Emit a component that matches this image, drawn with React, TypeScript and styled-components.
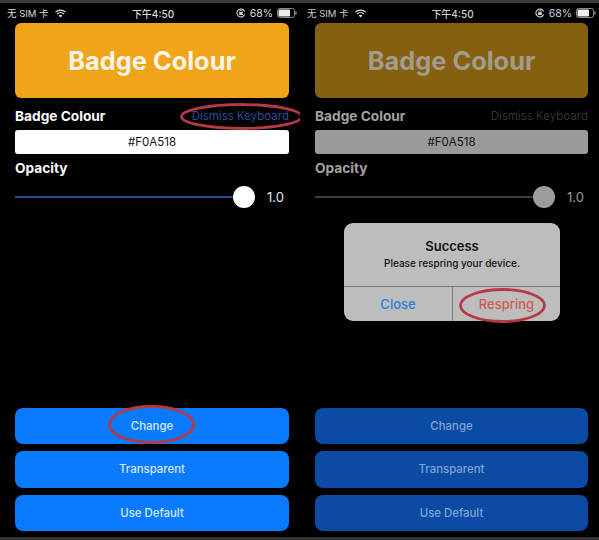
import React from "react";
import styled, { createGlobalStyle } from "styled-components";

const Global = createGlobalStyle`
  html, body { margin: 0; padding: 0; background: #000; }
  body { font-family: Inter, "Noto Sans CJK SC", "Liberation Sans", sans-serif; }
  * { box-sizing: border-box; }
`;

const Page = styled.div`
  width: 599px;
  height: 540px;
  display: flex;
  overflow: hidden;
  background: #000;
`;

const Phone = styled.section<{ $w: number }>`
  position: relative;
  width: ${(p) => p.$w}px;
  height: 540px;
  flex: none;
  display: flex;
  flex-direction: column;
  background: #000;
  border-top: 3px solid #3a3a3c;
  border-bottom: 3px solid #333;
`;

const StatusBar = styled.div<{ $dim: boolean }>`
  height: 20px;
  padding: 0 3px 0 7px;
  display: grid;
  grid-template-columns: 1fr auto 1fr;
  align-items: center;
  color: ${(p) => (p.$dim ? "#d0d0d0" : "#dcdcdc")};
`;

const StatusLeft = styled.div`
  display: flex;
  align-items: center;
  gap: 6px;
  font-size: 9.5px;
`;

const StatusTime = styled.div`
  font-size: 10px;
  font-weight: 500;
  margin-left: 2px;
`;

const StatusRight = styled.div`
  display: flex;
  justify-content: flex-end;
  align-items: center;
  gap: 4px;
  font-size: 10.5px;
`;

const Content = styled.div`
  flex: 1;
  display: flex;
  flex-direction: column;
  padding: 0 11px 6px 15px;
`;

const Banner = styled.div<{ $dim: boolean }>`
  height: 75px;
  border-radius: 6px;
  display: flex;
  align-items: center;
  justify-content: center;
  font-size: 25.4px;
  font-weight: 700;
  background: ${(p) => (p.$dim ? "#85600f" : "#f0a518")};
  color: ${(p) => (p.$dim ? "#a39c8e" : "#fbf4e6")};
`;

const LabelRow = styled.div`
  margin-top: 9px;
  height: 17px;
  display: flex;
  align-items: center;
  justify-content: space-between;
`;

const Label = styled.div<{ $dim: boolean }>`
  font-size: 13.7px;
  font-weight: 700;
  color: ${(p) => (p.$dim ? "#a2a2a2" : "#fafafa")};
`;

const Dismiss = styled.div<{ $dim: boolean }>`
  font-size: 11.5px;
  color: ${(p) => (p.$dim ? "#333336" : "#2a4f9f")};
`;

const Field = styled.div<{ $dim: boolean }>`
  margin-top: 6px;
  height: 24px;
  border-radius: 3px;
  display: flex;
  align-items: center;
  justify-content: center;
  font-size: 11.5px;
  color: #111;
  background: ${(p) => (p.$dim ? "#9a9a9a" : "#fff")};
`;

const OpacityLabel = styled(Label)`
  margin-top: 6px;
  height: 17px;
  line-height: 17px;
`;

const SliderRow = styled.div`
  margin-top: 8px;
  height: 24px;
  display: flex;
  align-items: center;
`;

const Track = styled.div<{ $dim: boolean }>`
  width: 218px;
  height: 2px;
  background: ${(p) => (p.$dim ? "#3c3c3e" : "#2a4a94")};
`;

const Thumb = styled.div<{ $dim: boolean }>`
  width: 22px;
  height: 22px;
  border-radius: 50%;
  flex: none;
  background: ${(p) => (p.$dim ? "#9c9c9c" : "#fff")};
`;

const SliderValue = styled.div<{ $dim: boolean }>`
  margin-left: 12px;
  font-size: 13px;
  color: ${(p) => (p.$dim ? "#9a9a9a" : "#e6e6e6")};
`;

const Spacer = styled.div`
  flex: 1;
`;

const Buttons = styled.div`
  display: flex;
  flex-direction: column;
  gap: 7px;
`;

const ActionButton = styled.div<{ $dim: boolean }>`
  height: 36.5px;
  border-radius: 8px;
  display: flex;
  align-items: center;
  justify-content: center;
  font-size: 11.4px;
  font-weight: 500;
  background: ${(p) => (p.$dim ? "#0b4ba3" : "#0a7aff")};
  color: ${(p) => (p.$dim ? "#7ea4d6" : "#d5e8ff")};
`;

const Alert = styled.div`
  position: absolute;
  left: 44px;
  top: 220px;
  width: 216px;
  height: 98px;
  border-radius: 9px;
  background: #bdbdbd;
  display: flex;
  flex-direction: column;
  color: #111;
`;

const AlertBody = styled.div`
  height: 63px;
  display: flex;
  flex-direction: column;
  align-items: center;
  padding-top: 15px;
`;

const AlertTitle = styled.div`
  font-size: 13px;
  font-weight: 600;
  line-height: 16px;
`;

const AlertText = styled.div`
  font-size: 10px;
  font-weight: 500;
  line-height: 14px;
  margin-top: 2px;
`;

const AlertActions = styled.div`
  flex: 1;
  display: grid;
  grid-template-columns: 108px 1fr;
  border-top: 1px solid #777;
`;

const AlertAction = styled.div<{ $red?: boolean }>`
  display: flex;
  align-items: center;
  justify-content: center;
  font-size: 13px;
  font-weight: 500;
  color: ${(p) => (p.$red ? "#d25a55" : "#2c7fd8")};
  & + & {
    border-left: 1px solid #777;
  }
`;

const Ring = styled.svg<{ $l: number; $t: number }>`
  position: absolute;
  left: ${(p) => p.$l}px;
  top: ${(p) => p.$t}px;
  overflow: visible;
  pointer-events: none;
`;

const Ellipse = ({ l, t, w, h }: { l: number; t: number; w: number; h: number }) => (
  <Ring $l={l} $t={t} width={w} height={h} viewBox={`0 0 ${w} ${h}`}>
    <ellipse cx={w / 2} cy={h / 2} rx={w / 2 - 1.5} ry={h / 2 - 1.5} fill="none" stroke="#b53a45" strokeWidth={2.8} />
  </Ring>
);

const Wifi = () => (
  <svg width="11" height="9" viewBox="0 0 12 9">
    <path d="M0.5 3 A8 8 0 0 1 11.5 3 M2.3 5 A5.4 5.4 0 0 1 9.7 5" fill="none" stroke="#e0e0e0" strokeWidth="1.4" />
    <path d="M6 8.8 L4 6.8 A3 3 0 0 1 8 6.8 Z" fill="#e0e0e0" />
  </svg>
);

const Lock = () => (
  <svg width="10" height="10" viewBox="0 0 10 10">
    <path d="M8.6 6.5 A4 4 0 1 1 8.6 3.5" fill="none" stroke="#d8d8d8" strokeWidth="1.1" />
    <rect x="3.2" y="4.2" width="3.6" height="2.8" fill="#d8d8d8" />
    <path d="M3.9 4.2 V3.2 A1.1 1.1 0 0 1 6.1 3.2 V4.2" fill="none" stroke="#d8d8d8" strokeWidth="0.8" />
  </svg>
);

const Battery = () => (
  <svg width="20" height="10" viewBox="0 0 20 10">
    <rect x="0.5" y="0.5" width="17" height="9" rx="2" fill="none" stroke="#8a8a8a" />
    <rect x="1.5" y="1.5" width="11.5" height="7" rx="1" fill="#eeeeee" />
    <rect x="18.2" y="3.2" width="1.4" height="3.6" rx="0.6" fill="#8a8a8a" />
  </svg>
);

const Screen = ({ dim, w }: { dim: boolean; w: number }) => (
  <Phone $w={w}>
    <StatusBar $dim={dim}>
      <StatusLeft>
        <span>无 SIM 卡</span>
        <Wifi />
      </StatusLeft>
      <StatusTime>下午4:50</StatusTime>
      <StatusRight>
        <Lock />
        <span>68%</span>
        <Battery />
      </StatusRight>
    </StatusBar>
    <Content>
      <Banner $dim={dim}>Badge Colour</Banner>
      <LabelRow>
        <Label $dim={dim}>Badge Colour</Label>
        <Dismiss $dim={dim}>Dismiss Keyboard</Dismiss>
      </LabelRow>
      <Field $dim={dim}>#F0A518</Field>
      <OpacityLabel $dim={dim}>Opacity</OpacityLabel>
      <SliderRow>
        <Track $dim={dim} />
        <Thumb $dim={dim} />
        <SliderValue $dim={dim}>1.0</SliderValue>
      </SliderRow>
      <Spacer />
      <Buttons>
        <ActionButton $dim={dim}>Change</ActionButton>
        <ActionButton $dim={dim}>Transparent</ActionButton>
        <ActionButton $dim={dim}>Use Default</ActionButton>
      </Buttons>
    </Content>
    {dim ? (
      <>
        <Alert>
          <AlertBody>
            <AlertTitle>Success</AlertTitle>
            <AlertText>Please respring your device.</AlertText>
          </AlertBody>
          <AlertActions>
            <AlertAction>Close</AlertAction>
            <AlertAction $red>Respring</AlertAction>
          </AlertActions>
        </Alert>
        <Ellipse l={159} t={285} w={87} h={35} />
      </>
    ) : (
      <>
        <Ellipse l={180} t={100} w={123} h={27} />
        <Ellipse l={108} t={402} w={87} h={39} />
      </>
    )}
  </Phone>
);

export default function App() {
  return (
    <Page>
      <Global />
      <Screen dim={false} w={300} />
      <Screen dim={true} w={299} />
    </Page>
  );
}
